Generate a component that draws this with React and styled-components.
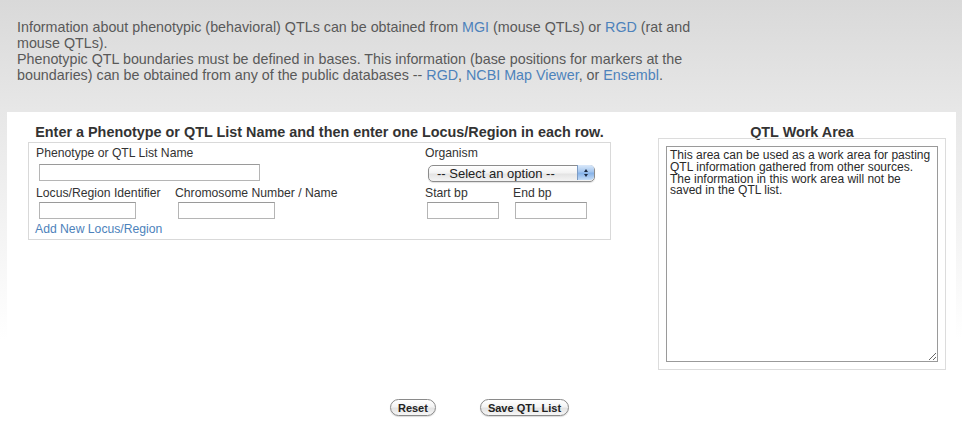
import React from 'react'
import styled, { createGlobalStyle } from 'styled-components'

const GlobalStyle = createGlobalStyle`
    html, body {
        margin: 0;
        padding: 0;
    }
    body {
        font-family: 'Liberation Sans', Arial, Helvetica, sans-serif;
        background: linear-gradient(to bottom, #d9d9d9 0px, #e7e7e7 110px, #fdfdfd 320px, #ffffff 340px) no-repeat;
        background-color: #ffffff;
        min-height: 427px;
    }
`

const Page = styled.div`
    display: flex;
    flex-direction: column;
    width: 962px;
`

const Intro = styled.p`
    margin: 0;
    padding: 19px 0 0 17px;
    font-size: 14.3px;
    line-height: 16px;
    color: #595959;
    white-space: nowrap;
`

const Link = styled.a`
    color: #4d82bb;
    text-decoration: none;
    cursor: pointer;
`

const Panel = styled.div`
    margin: 29px 6px 0 7px;
    background: #ffffff;
    display: flex;
    flex-direction: column;
    padding-bottom: 10px;
`

const Columns = styled.div`
    display: flex;
    flex-direction: row;
    align-items: flex-start;
    padding: 12px 0 0 21px;
`

const LeftCol = styled.div`
    display: flex;
    flex-direction: column;
    width: 583px;
`

const RightCol = styled.div`
    display: flex;
    flex-direction: column;
    width: 288px;
    margin-left: 47px;
`

const Heading = styled.h2`
    margin: 0 0 ${p => p.$gap}px 0;
    font-size: 14.4px;
    line-height: 16px;
    font-weight: bold;
    color: #333333;
    text-align: center;
    white-space: nowrap;
`

const FormBox = styled.div`
    box-sizing: border-box;
    width: 583px;
    border: 1px solid #d9d9d9;
    padding: 3px 0 3px 6px;
    display: grid;
    grid-template-columns: 139px 250px 1fr;
    grid-template-rows: auto auto auto auto auto;
`

const Cell = styled.div`
    grid-column: ${p => p.$col};
    display: flex;
    flex-direction: ${p => (p.$row ? 'row' : 'column')};
    margin-top: ${p => p.$top || 0}px;
`

const Label = styled.label`
    margin-left: 1px;
    font-size: 12.2px;
    line-height: 14px;
    color: #333333;
    white-space: nowrap;
`

const TextInput = styled.input`
    box-sizing: border-box;
    width: ${p => p.$w}px;
    height: 17px;
    margin: 0 0 0 ${p => p.$left || 4}px;
    padding: 0 2px;
    border: 1px solid #b5b5b5;
    border-top-color: #9a9a9a;
    background: #ffffff;
    font-family: inherit;
    font-size: 12px;
    outline: none;
`

const BpCol = styled.div`
    display: flex;
    flex-direction: column;
    width: 88px;
`

const SelectWrap = styled.div`
    position: relative;
    width: 167px;
    height: 17px;
    margin-left: 4px;
`

const Select = styled.select`
    appearance: none;
    -webkit-appearance: none;
    box-sizing: border-box;
    width: 100%;
    height: 100%;
    margin: 0;
    padding: 0 0 0 8px;
    border: 1px solid #8c8c8c;
    border-radius: 5px;
    background: linear-gradient(to bottom, #ffffff 0%, #f3f3f3 45%, #e4e4e4 55%, #f4f4f4 100%);
    box-shadow: 0 1px 1px rgba(0, 0, 0, 0.12);
    font-family: inherit;
    font-size: 13px;
    color: #222222;
    outline: none;
`

const SelectArrows = styled.span`
    position: absolute;
    top: 1px;
    right: 1px;
    width: 16px;
    height: 15px;
    border-radius: 0 4px 4px 0;
    border-left: 1px solid #7d9cc4;
    background: linear-gradient(to bottom, #dbe9fa 0%, #a3c5ee 45%, #86b2e8 55%, #c6ddf7 100%);
    display: flex;
    flex-direction: column;
    align-items: center;
    justify-content: center;
    gap: 2px;
    pointer-events: none;
`

const Arrow = styled.span`
    width: 0;
    height: 0;
    border-left: 2.5px solid transparent;
    border-right: 2.5px solid transparent;
    ${p => (p.$up ? 'border-bottom: 3px solid #1c2b44;' : 'border-top: 3px solid #1c2b44;')}
`

const AddLink = styled(Link)`
    font-size: 12.2px;
    line-height: 14px;
    white-space: nowrap;
`

const WorkBox = styled.div`
    box-sizing: border-box;
    width: 288px;
    margin-top: -2px;
    border: 1px solid #dcdcdc;
    padding: 7px;
    display: flex;
`

const WorkArea = styled.textarea`
    box-sizing: border-box;
    width: 272px;
    height: 216px;
    margin: 0;
    padding: 3px 3px;
    border: 1px solid #9a9a9a;
    font-family: inherit;
    font-size: 12px;
    line-height: 11.8px;
    color: #2a2a2a;
    resize: both;
    outline: none;
`

const ButtonRow = styled.div`
    display: flex;
    flex-direction: row;
    justify-content: center;
    gap: 44px;
    margin-top: 29px;
    padding-right: 4px;
`

const PillButton = styled.button`
    box-sizing: border-box;
    height: 17px;
    padding: 0 7px;
    border: 1px solid #8a8a8a;
    border-radius: 9px;
    background: linear-gradient(to bottom, #ffffff 0%, #f4f4f4 45%, #e3e3e3 55%, #f7f7f7 100%);
    box-shadow: 0 1px 1px rgba(0, 0, 0, 0.15);
    font-family: inherit;
    font-size: 11px;
    font-weight: bold;
    line-height: 14px;
    color: #222222;
    cursor: pointer;
`

const App = () => {
    return <Page>
        <GlobalStyle />
        <Intro>
            Information about phenotypic (behavioral) QTLs can be obtained from <Link>MGI</Link> (mouse QTLs) or <Link>RGD</Link> (rat and<br />
            mouse QTLs).<br />
            Phenotypic QTL boundaries must be defined in bases. This information (base positions for markers at the<br />
            boundaries) can be obtained from any of the public databases -- <Link>RGD</Link>, <Link>NCBI Map Viewer</Link>, or <Link>Ensembl</Link>.
        </Intro>
        <Panel>
            <Columns>
                <LeftCol>
                    <Heading $gap={2}>Enter a Phenotype or QTL List Name and then enter one Locus/Region in each row.</Heading>
                    <FormBox>
                        <Cell $col="1 / 3"><Label>Phenotype or QTL List Name</Label></Cell>
                        <Cell $col="3"><Label>Organism</Label></Cell>
                        <Cell $col="1 / 3" $top={4}><TextInput $w={221} /></Cell>
                        <Cell $col="3" $top={4}>
                            <SelectWrap>
                                <Select defaultValue="">
                                    <option value="">-- Select an option --</option>
                                    <option value="mouse">Mouse</option>
                                    <option value="rat">Rat</option>
                                </Select>
                                <SelectArrows><Arrow $up /><Arrow /></SelectArrows>
                            </SelectWrap>
                        </Cell>
                        <Cell $col="1" $top={5}><Label>Locus/Region Identifier</Label></Cell>
                        <Cell $col="2" $top={5}><Label>Chromosome Number / Name</Label></Cell>
                        <Cell $col="3" $top={5} $row>
                            <BpCol><Label>Start bp</Label></BpCol>
                            <BpCol><Label>End bp</Label></BpCol>
                        </Cell>
                        <Cell $col="1" $top={2}><TextInput $w={97} /></Cell>
                        <Cell $col="2" $top={2}><TextInput $w={97} /></Cell>
                        <Cell $col="3" $top={2} $row>
                            <BpCol><TextInput $w={72} $left={3} /></BpCol>
                            <BpCol><TextInput $w={72} $left={3} /></BpCol>
                        </Cell>
                        <Cell $col="1 / 3" $top={3}><AddLink>Add New Locus/Region</AddLink></Cell>
                    </FormBox>
                </LeftCol>
                <RightCol>
                    <Heading $gap={0}>QTL Work Area</Heading>
                    <WorkBox>
                        <WorkArea defaultValue="This area can be used as a work area for pasting QTL information gathered from other sources. The information in this work area will not be saved in the QTL list." />
                    </WorkBox>
                </RightCol>
            </Columns>
            <ButtonRow>
                <PillButton>Reset</PillButton>
                <PillButton>Save QTL List</PillButton>
            </ButtonRow>
        </Panel>
    </Page>
}

export default App
